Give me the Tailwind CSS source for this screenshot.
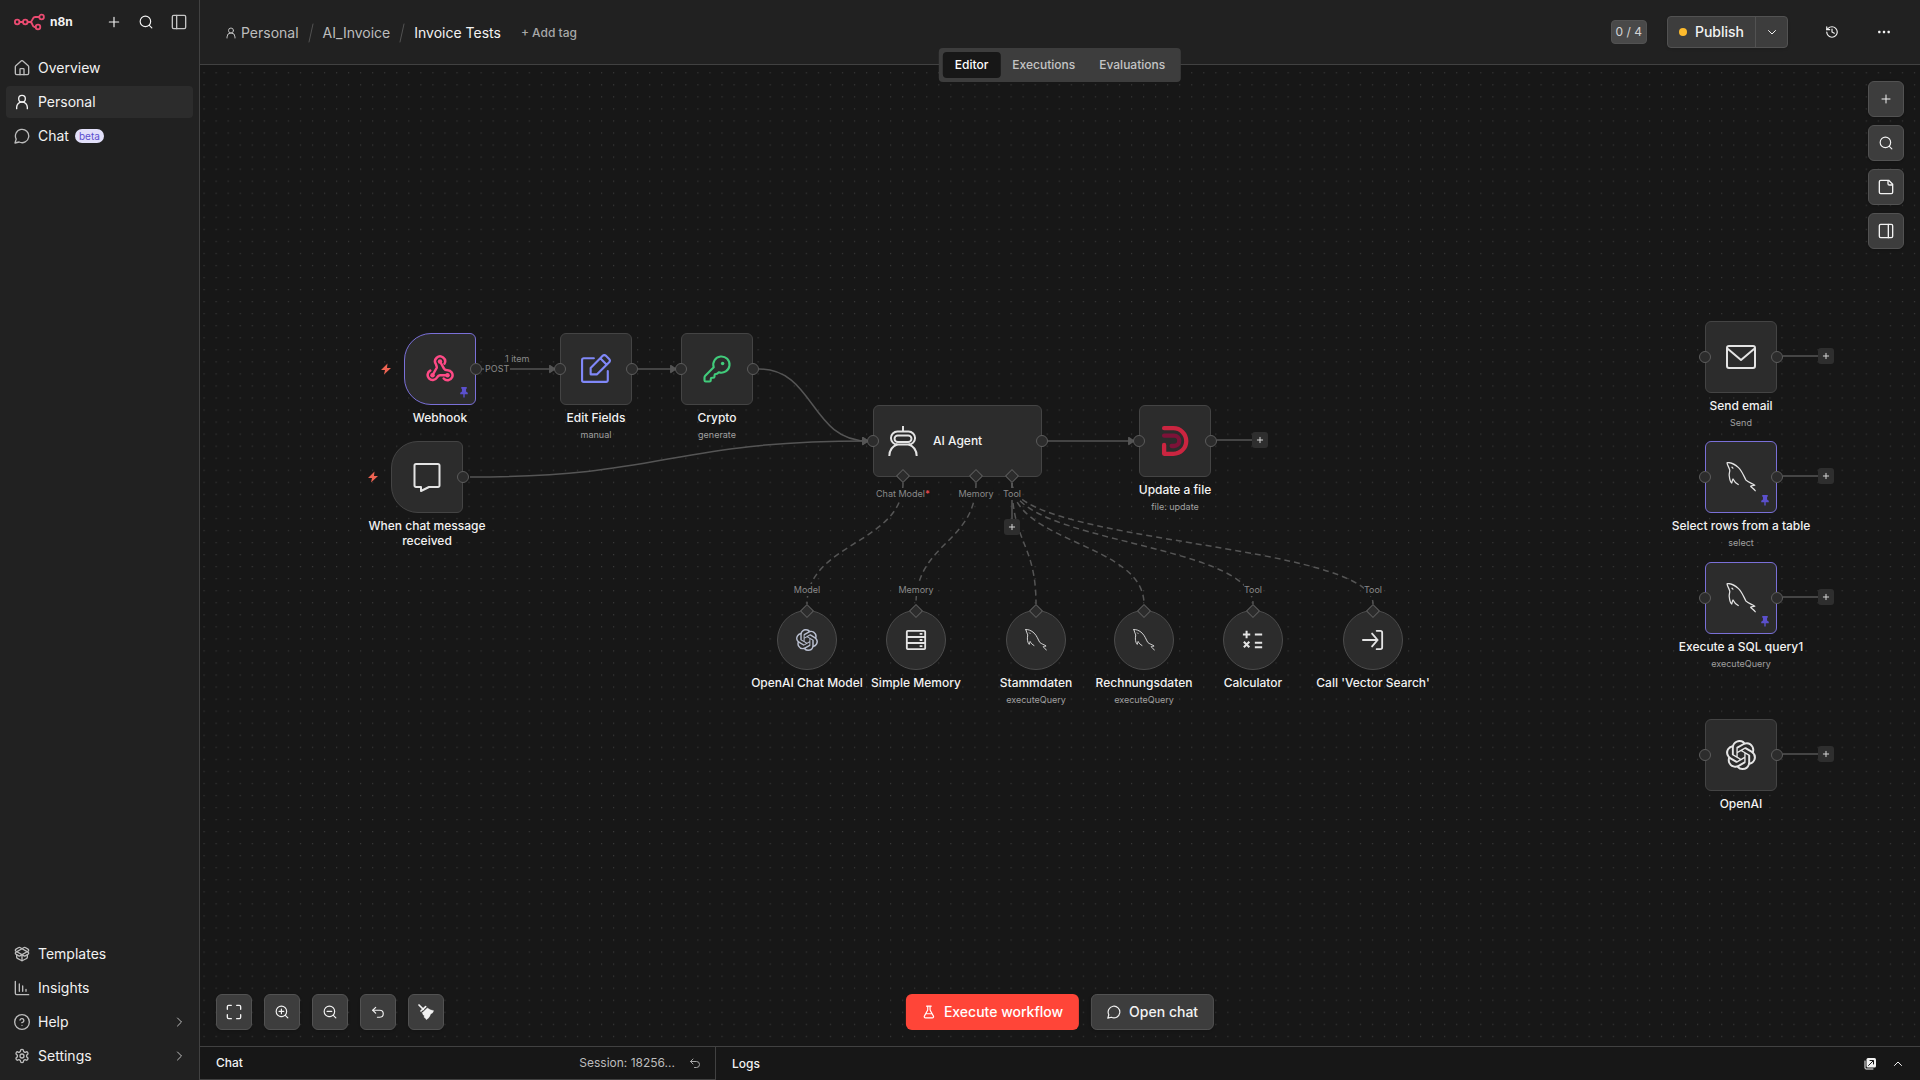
<!DOCTYPE html>
<html lang="en">
<head>
  <meta charset="UTF-8">
  <meta name="viewport" content="width=device-width, initial-scale=1.0">
  <title>Invoice Tests - n8n</title>
  <script src="https://cdn.jsdelivr.net/npm/@tailwindcss/browser@4"></script>
</head>
<body class="flex h-screen overflow-hidden bg-[#171717] fill-none stroke-current stroke-2 font-['Inter',sans-serif] text-sm text-[#f2f2f2] [stroke-linecap:round] [stroke-linejoin:round]">

  <!-- Icon sprite, stroke settings are inherited from the body -->
  <svg class="hidden">
    <symbol id="plus" viewBox="0 0 24 24"><path d="M4 12h16M12 4v16"/></symbol>
    <symbol id="search" viewBox="0 0 24 24"><circle cx="11" cy="11" r="9"/><path d="m22 22-4.3-4.3"/></symbol>
    <symbol id="panel-left" viewBox="0 0 24 24"><rect x="2" y="2" width="20" height="20" rx="2"/><path d="M8.500 2v20"/></symbol>
    <symbol id="panel-right" viewBox="0 0 24 24"><rect x="2" y="2" width="20" height="20" rx="2"/><path d="M15.500 2v20"/></symbol>
    <symbol id="home" viewBox="0 0 24 24"><path d="M15 22v-8a1 1 0 0 0-1-1h-4a1 1 0 0 0-1 1v8"/><path d="M2 10a2 2 0 0 1 .7-1.500l8-7a2 2 0 0 1 2.600 0l8 7A2 2 0 0 1 22 10v10a2 2 0 0 1-2 2H4a2 2 0 0 1-2-2z"/></symbol>
    <symbol id="user" viewBox="0 0 24 24"><circle cx="12" cy="7" r="5"/><path d="M20 22v-2a8 8 0 0 0-16 0v2"/></symbol>
    <symbol id="chat" viewBox="0 0 24 24"><path d="M7.700 21A10 10 0 1 0 3.300 16.700L1.500 22.500Z"/></symbol>
    <symbol id="package" viewBox="0 0 24 24"><path d="M12 22v-9"/><path d="M15.170 2.210a1.670 1.670 0 0 1 1.630 0L21 4.570a1.930 1.930 0 0 1 0 3.360L8.820 14.790a1.655 1.655 0 0 1-1.640 0L3 12.430a1.930 1.930 0 0 1 0-3.360z"/><path d="M20 13v3.870a2.060 2.060 0 0 1-1.110 1.830l-6 3.080a1.930 1.930 0 0 1-1.780 0l-6-3.080A2.060 2.060 0 0 1 4 16.870V13"/><path d="M21 12.430a1.930 1.930 0 0 0 0-3.360L8.830 2.200a1.640 1.640 0 0 0-1.630 0L3 4.570a1.930 1.930 0 0 0 0 3.360l12.180 6.860a1.636 1.636 0 0 0 1.630 0z"/></symbol>
    <symbol id="chart" viewBox="0 0 24 24"><path d="M2 2v18a2 2 0 0 0 2 2h18M8 6v11M13 9v8M18 14v3"/></symbol>
    <symbol id="help" viewBox="0 0 24 24"><circle cx="12" cy="12" r="11"/><path d="M9 9a3 3 0 0 1 5.830 1c0 2-3 3-3 3M12 17h.01"/></symbol>
    <symbol id="gear" viewBox="0 0 24 24"><path d="M12.220 2h-.44a2 2 0 0 0-2 2v.18a2 2 0 0 1-1 1.730l-.43.25a2 2 0 0 1-2 0l-.15-.08a2 2 0 0 0-2.730.73l-.22.38a2 2 0 0 0 .73 2.730l.15.1a2 2 0 0 1 1 1.720v.51a2 2 0 0 1-1 1.740l-.15.09a2 2 0 0 0-.73 2.730l.22.38a2 2 0 0 0 2.730.73l.15-.08a2 2 0 0 1 2 0l.43.25a2 2 0 0 1 1 1.730V20a2 2 0 0 0 2 2h.44a2 2 0 0 0 2-2v-.18a2 2 0 0 1 1-1.730l.43-.25a2 2 0 0 1 2 0l.15.08a2 2 0 0 0 2.730-.73l.22-.39a2 2 0 0 0-.73-2.730l-.15-.08a2 2 0 0 1-1-1.740v-.5a2 2 0 0 1 1-1.740l.15-.09a2 2 0 0 0 .73-2.730l-.22-.38a2 2 0 0 0-2.730-.73l-.15.08a2 2 0 0 1-2 0l-.43-.25a2 2 0 0 1-1-1.730V4a2 2 0 0 0-2-2z"/><circle cx="12" cy="12" r="3"/></symbol>
    <symbol id="chevron-right" viewBox="0 0 24 24"><path d="m9 20 8-8-8-8"/></symbol>
    <symbol id="chevron-down" viewBox="0 0 24 24"><path d="m5 9 7 7 7-7"/></symbol>
    <symbol id="chevron-up" viewBox="0 0 24 24"><path d="m5 15 7-7 7 7"/></symbol>
    <symbol id="history" viewBox="0 0 24 24"><path d="M3 12a9 9 0 1 0 9-9 9.750 9.750 0 0 0-6.740 2.740L3 8"/><path d="M3 3v5h5M12 7v5l4 2"/></symbol>
    <symbol id="dots" viewBox="0 0 24 24"><g fill="currentColor" stroke="none"><rect x="2" y="10" width="4" height="4" rx="1"/><rect x="10" y="10" width="4" height="4" rx="1"/><rect x="18" y="10" width="4" height="4" rx="1"/></g></symbol>
    <symbol id="note" viewBox="0 0 24 24"><path d="M16 2H4a2 2 0 0 0-2 2v16a2 2 0 0 0 2 2h16a2 2 0 0 0 2-2V8ZM15 2v5a2 2 0 0 0 2 2h5"/></symbol>
    <symbol id="fit" viewBox="0 0 24 24"><path d="M8 2H4a2 2 0 0 0-2 2v4M22 8V4a2 2 0 0 0-2-2h-4M2 16v4a2 2 0 0 0 2 2h4M16 22h4a2 2 0 0 0 2-2v-4"/></symbol>
    <symbol id="zoom-in" viewBox="0 0 24 24"><circle cx="11" cy="11" r="9"/><path d="m22 22-4.300-4.300M11 7v8M7 11h8"/></symbol>
    <symbol id="zoom-out" viewBox="0 0 24 24"><circle cx="11" cy="11" r="9"/><path d="m22 22-4.300-4.300M7 11h8"/></symbol>
    <symbol id="undo" viewBox="0 0 24 24"><path d="M8 14 3 9l5-5"/><path d="M3 9h12a6 6 0 0 1 0 12h-4"/></symbol>
    <symbol id="broom" viewBox="0 0 48 48"><path d="M3 3 16 16" stroke-width="5"/><path d="M9 21 23 8" stroke-width="5"/><path d="M13 26 28 12Q37 19 47 20 45 28 38 30 35 42 25 47 22 41 18 40L19 35Q14 33 13 26Z" fill="currentColor" stroke-width="1"/></symbol>
    <symbol id="flask" viewBox="0 0 24 24"><path d="M14 2v6a2 2 0 0 0 .25.96l5.500 10.080A2 2 0 0 1 18 22H6a2 2 0 0 1-1.750-2.960L9.750 8.960A2 2 0 0 0 10 8V2M6.500 15h11M8 2h8"/></symbol>
    <symbol id="popout" viewBox="0 0 24 24"><path d="M2 6v14a2 2 0 0 0 2 2h14"/><rect x="5" y="0" width="19" height="19" rx="3" fill="currentColor" stroke="none"/><path d="m9 15 9-9M12 5h7v7" stroke="#171717"/></symbol>
    <symbol id="bolt" viewBox="0 0 24 24"><path d="M15 1 2 14h8L8 23 22 10h-8Z" fill="currentColor" stroke="none"/></symbol>
    <symbol id="pin" viewBox="0 0 24 32"><path d="M4 0h16v4l-2 2v7l5 4v4H14v8l-2 3-2-3v-8H1v-4l5-4V6L4 4Z" fill="currentColor" stroke="none"/></symbol>
    <symbol id="webhook" viewBox="0 0 24 24"><path d="M18 17h-6c-1.100 0-1.950.94-2.480 1.900A4 4 0 1 1 4.200 13.300M6 17l3.300-5.800c.4-1-.2-2-.6-3.100a4 4 0 1 1 6.900-.3M12 6l3.200 5.700c.6 1 1.700 1.300 2.800 1.300a4 4 0 1 1-3 6.600"/><g fill="currentColor" stroke="none"><circle cx="12" cy="6" r="1.800"/><circle cx="6" cy="17" r="1.800"/><circle cx="18" cy="17" r="1.800"/></g></symbol>
    <symbol id="edit" viewBox="0 0 28 28"><path d="M12 4H2.500A1.500 1.500 0 0 0 1 5.500v19A1.500 1.500 0 0 0 2.500 26h21a1.500 1.500 0 0 0 1.500-1.500V16M9 19v-6L20.500 1.500a2 2 0 0 1 2.500 0L26.500 5a2 2 0 0 1 0 2.500L15 19ZM18 4l6 6"/></symbol>
    <symbol id="key" viewBox="0 0 24 24"><path d="M2.586 17.414A2 2 0 0 0 2 18.828V21a1 1 0 0 0 1 1h3a1 1 0 0 0 1-1v-1a1 1 0 0 1 1-1h1a1 1 0 0 0 1-1v-1a1 1 0 0 1 1-1h.172a2 2 0 0 0 1.414-.586l.814-.814a6.500 6.500 0 1 0-4-4z" stroke-width="1.700"/><circle cx="16.500" cy="7.500" r="1.400" fill="currentColor" stroke="none"/></symbol>
    <symbol id="message" viewBox="0 0 28 30"><path d="M3 2h22a1.500 1.500 0 0 1 1.500 1.500v20A1.500 1.500 0 0 1 25 25h-9l-8 4v-4H3a1.500 1.500 0 0 1-1.500-1.500v-20A1.500 1.500 0 0 1 3 2Z"/></symbol>
    <symbol id="robot" viewBox="0 0 92 92"><g stroke-width="6" stroke-linecap="butt"><path d="M46 0v15"/><rect x="9" y="17" width="74" height="40" rx="20"/><rect x="20" y="29" width="52" height="20" rx="10"/><path d="M4 92C4 74 14 62 29 56M88 92C88 74 78 62 63 56"/></g></symbol>
    <symbol id="paperless" viewBox="0 0 73 84"><path d="M6 27h28a14 14 0 0 1 0 29h-7" stroke="#7d1238" stroke-width="12"/><path d="M6 6h26a36 36 0 0 1 0 72H6V53" stroke="#cb2540" stroke-width="12"/></symbol>
    <symbol id="mail" viewBox="0 0 30 26"><rect x="1" y="2" width="28" height="22" rx="2"/><path d="m2 5 13 11L28 5"/></symbol>
    <symbol id="mysql" viewBox="0 0 24 24"><path d="M.8.600C3 .2 7 1.500 10 4.500 13 7.500 14.300 11.500 16 14.500 18 16.500 21 17 23 18.600 21.500 18.800 19 19 20 19.800 21 20.800 22.500 21.500 23.400 23M.8.600C1 2.500 2.600 4.500 3 6.500 3 8.500 2.300 9.500 2.600 11 2.800 13 3.400 16 4.600 16.800 5 15.500 5 14.500 5.600 13.600 6.500 15.500 8 17 9.800 18M4.800 4.200l.7.700" stroke-width="1"/></symbol>
    <symbol id="openai" viewBox="0 0 24 24"><path fill="currentColor" stroke="none" d="M22.2819 9.8211a5.9847 5.9847 0 0 0-.5157-4.9108 6.0462 6.0462 0 0 0-6.5098-2.9A6.0651 6.0651 0 0 0 4.9807 4.1818a5.9847 5.9847 0 0 0-3.9977 2.9 6.0462 6.0462 0 0 0 .7427 7.0966 5.98 5.98 0 0 0 .511 4.9107 6.051 6.051 0 0 0 6.5146 2.9001A5.9847 5.9847 0 0 0 13.2599 24a6.0557 6.0557 0 0 0 5.7718-4.2058 5.9894 5.9894 0 0 0 3.9977-2.9001 6.0557 6.0557 0 0 0-.7475-7.0729zm-9.022 12.6081a4.4755 4.4755 0 0 1-2.8764-1.0408l.1419-.0804 4.7783-2.7582a.7948.7948 0 0 0 .3927-.6813v-6.7369l2.02 1.1686a.071.071 0 0 1 .038.052v5.5826a4.504 4.504 0 0 1-4.4945 4.4944zm-9.6607-4.1254a4.4708 4.4708 0 0 1-.5346-3.0137l.142.0852 4.783 2.7582a.7712.7712 0 0 0 .7806 0l5.8428-3.3685v2.3324a.0804.0804 0 0 1-.0332.0615L9.74 19.9502a4.4992 4.4992 0 0 1-6.1408-1.6464zM2.3408 7.8956a4.485 4.485 0 0 1 2.3655-1.9728V11.6a.7664.7664 0 0 0 .3879.6765l5.8144 3.3543-2.0201 1.1685a.0757.0757 0 0 1-.071 0l-4.8303-2.7865A4.504 4.504 0 0 1 2.3408 7.872zm16.5963 3.8558L13.1038 8.364 15.1192 7.2a.0757.0757 0 0 1 .071 0l4.8303 2.7913a4.4944 4.4944 0 0 1-.6765 8.1042v-5.6772a.79.79 0 0 0-.407-.667zm2.0107-3.0231l-.142-.0852-4.7735-2.7818a.7759.7759 0 0 0-.7854 0L9.409 9.2297V6.8974a.0662.0662 0 0 1 .0284-.0615l4.8303-2.7866a4.4992 4.4992 0 0 1 6.6802 4.66zM8.3065 12.863l-2.02-1.1638a.0804.0804 0 0 1-.038-.0567V6.0742a4.4992 4.4992 0 0 1 7.3757-3.4537l-.142.0805L8.704 5.459a.7948.7948 0 0 0-.3927.6813zm1.0976-2.3654l2.602-1.4998 2.6069 1.4998v2.9994l-2.5974 1.4997-2.6067-1.4997Z"/></symbol>
    <symbol id="memory" viewBox="0 0 24 24"><rect x="2" y="2" width="20" height="20" rx="1"/><path d="M2 8.700h20M2 15.300h20M16 5.400h3M16 12h3M16 18.700h3" stroke-linecap="butt"/></symbol>
    <symbol id="calculator" viewBox="0 0 24 24"><path d="M5 2v8M1 6h8M14 6h8M14 15h8M14 20h8M2 14l6 6M8 14l-6 6" stroke-width="2.200" stroke-linecap="butt"/></symbol>
    <symbol id="login" viewBox="0 0 24 24"><path d="M16 2h4a2 2 0 0 1 2 2v16a2 2 0 0 1-2 2h-4M1 12h16M11 5l6 7-6 7"/></symbol>
  </svg>

  <!-- Sidebar -->
  <aside class="flex w-[200px] shrink-0 flex-col border-r border-[#414141] bg-[#212121] pb-2">
    <div class="flex h-11 items-center pl-[14px] pr-3">
      <svg class="h-[18px] w-8" viewBox="0 0 32 18" fill="none" stroke="#ea4b71" stroke-width="1.800"><circle cx="3.200" cy="9" r="2.300"/><circle cx="11.300" cy="9" r="2.300"/><circle cx="27.600" cy="4" r="2.300"/><circle cx="24" cy="14" r="2.300"/><path d="M5.500 9H9M13.600 9h2.400c3 0 1.800-5 5-5h4.300M16 9c3 0 1.800 5 4.500 5h1.200"/></svg>
      <span class="ml-1 text-xs font-bold">n8n</span>
      <div class="ml-auto flex items-center gap-[18px]">
        <button aria-label="Create"><svg class="size-[14px]"><use href="#plus"/></svg></button>
        <button aria-label="Search"><svg class="size-[14px]"><use href="#search"/></svg></button>
        <button aria-label="Toggle sidebar" class="text-[#c4c4c4]"><svg class="size-4"><use href="#panel-left"/></svg></button>
      </div>
    </div>
    <nav class="mt-2 flex flex-1 flex-col gap-[2px] px-[6px]">
      <a href="#" class="flex h-8 items-center gap-2 rounded px-2"><svg class="size-4 text-[#bdbdbd]"><use href="#home"/></svg>Overview</a>
      <a href="#" class="flex h-8 items-center gap-2 rounded bg-[#2c2c2c] px-2"><svg class="size-4"><use href="#user"/></svg>Personal</a>
      <a href="#" class="flex h-8 items-center gap-2 rounded px-2"><svg class="size-4 text-[#bdbdbd]"><use href="#chat"/></svg>Chat <span class="-ml-[2px] rounded-full bg-[#e2e0fa] px-1 text-[10px] leading-[14px] text-[#5a4fcf]">beta</span></a>
      <a href="#" class="mt-auto flex h-8 items-center gap-2 rounded px-2"><svg class="size-4 text-[#bdbdbd]"><use href="#package"/></svg>Templates</a>
      <a href="#" class="flex h-8 items-center gap-2 rounded px-2"><svg class="size-4 text-[#bdbdbd]"><use href="#chart"/></svg>Insights</a>
      <a href="#" class="flex h-8 items-center gap-2 rounded px-2"><svg class="size-4 text-[#bdbdbd]"><use href="#help"/></svg>Help<svg class="ml-auto size-3 text-[#bdbdbd]"><use href="#chevron-right"/></svg></a>
      <a href="#" class="flex h-8 items-center gap-2 rounded px-2"><svg class="size-4 text-[#bdbdbd]"><use href="#gear"/></svg>Settings<svg class="ml-auto size-3 text-[#bdbdbd]"><use href="#chevron-right"/></svg></a>
    </nav>
  </aside>

  <main class="relative flex min-w-0 flex-1 flex-col">
    <!-- Header -->
    <header class="flex h-[65px] shrink-0 items-center border-b border-[#414141] bg-[#212121] pl-[25px] pr-5">
      <nav class="flex items-center pt-[2px] text-[#bdbdbd]">
        <a href="#" class="flex items-center gap-1"><svg class="size-3"><use href="#user"/></svg>Personal</a>
        <svg class="mx-[9px] h-5 w-[6px]" viewBox="0 0 6 20" stroke="#525252" stroke-width="1"><path d="M5 1 1 19"/></svg>
        <a href="#">AI_Invoice</a>
        <svg class="mx-[9px] h-5 w-[6px]" viewBox="0 0 6 20" stroke="#525252" stroke-width="1"><path d="M5 1 1 19"/></svg>
        <h1 class="text-[#f2f2f2]">Invoice Tests</h1>
      </nav>
      <button class="ml-5 pt-[2px] text-xs font-medium text-[#a8a8a8]">+ Add tag</button>
      <div class="ml-auto flex items-center">
        <span class="rounded border border-[#525252] bg-[#494949] px-1 text-xs leading-[22px] text-[#d4d4d4]">0 / 4</span>
        <div class="ml-5 flex h-8 rounded border border-[#525252] bg-[#3d3d3d] shadow">
          <button class="flex items-center gap-2 px-[11px] font-medium"><span class="size-2 rounded-full bg-[#fdbb2d]"></span>Publish</button>
          <button aria-label="Publish options" class="flex w-8 items-center justify-center border-l border-[#525252]"><svg class="size-3"><use href="#chevron-down"/></svg></button>
        </div>
        <button aria-label="History" class="ml-[26px] flex size-9 items-center justify-center"><svg class="size-[14px]"><use href="#history"/></svg></button>
        <button aria-label="More" class="ml-[18px] flex size-8 items-center justify-center"><svg class="size-[14px]"><use href="#dots"/></svg></button>
      </div>
    </header>

    <!-- View switch, lies over the header's lower edge -->
    <div class="absolute left-1/2 top-12 z-10 flex h-[34px] -translate-x-1/2 rounded bg-[#3d3d3d] p-1 text-xs font-medium text-[#c4c4c4]">
      <button class="rounded bg-[#171717] px-3 text-white">Editor</button>
      <button class="px-3">Executions</button>
      <button class="px-3">Evaluations</button>
    </div>

    <!-- Canvas -->
    <section id="canvas" class="relative min-h-0 flex-1 overflow-hidden">
      <svg class="absolute inset-0 h-full w-full" fill="none" stroke="#555" stroke-width="1.500" stroke-linecap="butt">
        <defs>
          <pattern id="grid" width="12.045" height="12.045" patternUnits="userSpaceOnUse" x="3.500" y="7.200"><circle cx=".6" cy=".6" r=".6" fill="#424242" stroke="none"/></pattern>
          <marker id="arrow" viewBox="0 0 8 10" refX="7" refY="5" markerWidth="7" markerHeight="9" markerUnits="userSpaceOnUse" orient="0"><path d="M1 1v8l6-4Z" fill="#555" stroke="#555"/></marker>
        </defs>
        <rect width="100%" height="100%" fill="url(#grid)" stroke="none"/>
        <g marker-end="url(#arrow)">
          <path d="M282 304H355"/>
          <path d="M438 304H476"/>
          <path d="M559 304C615 304 610 376 668 376"/>
          <path d="M270 412C468 412 468 376 668 376"/>
          <path d="M848 376H934"/>
        </g>
        <path d="M1017 375h36M1583 291h36M1583 411h36M1583 532h36M1583 689h36M812 418v38"/>
        <g stroke-dasharray="6 4">
          <path d="M703 418C703 478 607 478 607 539"/>
          <path d="M776 418C776 478 716 478 716 539"/>
          <path d="M812 418C812 478 836 478 836 539"/>
          <path d="M812 418C812 478 944 478 944 539"/>
          <path d="M812 418C812 478 1053 478 1053 539"/>
          <path d="M812 418C812 478 1173 478 1173 539"/>
        </g>
      </svg>
      <div id="nodes"></div>

      <span class="absolute left-[284px] top-[298px] bg-[#171717] px-px text-[9px] leading-3 text-[#8a8a8a]">POST</span>
      <span class="absolute left-[305px] top-[288px] text-[9px] leading-3 text-[#8a8a8a]">1 item</span>

      <div class="absolute right-4 top-4 flex flex-col gap-2">
        <button aria-label="Add node" class="flex size-9 items-center justify-center rounded-md border border-[#525252] bg-[#3d3d3d] shadow"><svg class="size-3"><use href="#plus"/></svg></button>
        <button aria-label="Find" class="flex size-9 items-center justify-center rounded-md border border-[#525252] bg-[#3d3d3d] shadow"><svg class="size-[14px]"><use href="#search"/></svg></button>
        <button aria-label="Add note" class="flex size-9 items-center justify-center rounded-md border border-[#525252] bg-[#3d3d3d] shadow"><svg class="size-4"><use href="#note"/></svg></button>
        <button aria-label="Toggle panel" class="flex size-9 items-center justify-center rounded-md border border-[#525252] bg-[#3d3d3d] shadow"><svg class="size-4"><use href="#panel-right"/></svg></button>
      </div>

      <div class="absolute bottom-4 left-4 flex gap-3">
        <button aria-label="Fit view" class="flex size-9 items-center justify-center rounded-md border border-[#525252] bg-[#3d3d3d] shadow"><svg class="size-4"><use href="#fit"/></svg></button>
        <button aria-label="Zoom in" class="flex size-9 items-center justify-center rounded-md border border-[#525252] bg-[#3d3d3d] shadow"><svg class="size-[14px]"><use href="#zoom-in"/></svg></button>
        <button aria-label="Zoom out" class="flex size-9 items-center justify-center rounded-md border border-[#525252] bg-[#3d3d3d] shadow"><svg class="size-[14px]"><use href="#zoom-out"/></svg></button>
        <button aria-label="Undo" class="flex size-9 items-center justify-center rounded-md border border-[#525252] bg-[#3d3d3d] shadow"><svg class="size-[14px]"><use href="#undo"/></svg></button>
        <button aria-label="Tidy up" class="flex size-9 items-center justify-center rounded-md border border-[#525252] bg-[#3d3d3d] shadow"><svg class="size-4"><use href="#broom"/></svg></button>
      </div>

      <div class="absolute bottom-4 left-1/2 flex -translate-x-1/2 gap-3 font-medium">
        <button class="flex h-9 items-center gap-2 rounded-md bg-[#ff4538] px-4 text-white"><svg class="size-[14px]"><use href="#flask"/></svg>Execute workflow</button>
        <button class="flex h-9 items-center gap-2 rounded-md border border-[#525252] bg-[#3d3d3d] px-[15px] shadow"><svg class="size-[14px]"><use href="#chat"/></svg>Open chat</button>
      </div>
    </section>

    <!-- Chat and logs bar -->
    <footer class="flex h-[34px] shrink-0 border-t border-[#414141] text-xs font-medium">
      <div class="flex w-[30%] items-center border-b border-r border-[#414141] pl-4 pr-[14px]">
        <span>Chat</span>
        <span class="ml-auto font-normal text-[#bdbdbd]">Session: 18256...</span>
        <button aria-label="Reset session" class="ml-[14px] text-[#a8a8a8]"><svg class="size-3"><use href="#undo"/></svg></button>
      </div>
      <div class="flex flex-1 items-center pl-4 pr-4">
        <span>Logs</span>
        <button aria-label="Pop out" class="ml-auto"><svg class="size-3"><use href="#popout"/></svg></button>
        <button aria-label="Expand" class="ml-4"><svg class="size-3"><use href="#chevron-up"/></svg></button>
      </div>
    </footer>
  </main>

  <script>
    const nodes = [
      { name: "Webhook", icon: "webhook", x: 204, y: 268, color: "text-[#ff4a86]", trigger: true, pinned: true, out: true },
      { name: "When chat message received", icon: "message", x: 191, y: 376, trigger: true, out: true },
      { name: "Edit Fields", sub: "manual", icon: "edit", x: 360, y: 268, color: "text-[#8088f8]", in: true, out: true },
      { name: "Crypto", sub: "generate", icon: "key", x: 481, y: 268, color: "text-[#41cc7b]", in: true, out: true },
      { name: "Update a file", sub: "file: update", icon: "paperless", x: 939, y: 340, in: true, out: true, plus: true },
      { name: "Send email", sub: "Send", icon: "mail", x: 1505, y: 256, in: true, out: true, plus: true },
      { name: "Select rows from a table", sub: "select", icon: "mysql", x: 1505, y: 376, pinned: true, in: true, out: true, plus: true },
      { name: "Execute a SQL query1", sub: "executeQuery", icon: "mysql", x: 1505, y: 497, pinned: true, in: true, out: true, plus: true },
      { name: "OpenAI", icon: "openai", x: 1505, y: 654, in: true, out: true, plus: true },
    ];

    const subNodes = [
      { name: "OpenAI Chat Model", icon: "openai", x: 577, label: "Model", color: "text-[#b9bfd0]" },
      { name: "Simple Memory", icon: "memory", x: 686, label: "Memory" },
      { name: "Stammdaten", sub: "executeQuery", icon: "mysql", x: 806 },
      { name: "Rechnungsdaten", sub: "executeQuery", icon: "mysql", x: 914 },
      { name: "Calculator", icon: "calculator", x: 1023, label: "Tool" },
      { name: "Call 'Vector Search'", icon: "login", x: 1143, label: "Tool" },
    ];

    const dot = "absolute top-1/2 size-3 -translate-y-1/2 rounded-full border border-[#5c5c5c] bg-[#2c2c2c]";
    const diamond = "absolute size-[10px] -translate-x-1/2 -translate-y-1/2 rotate-45 border border-[#5c5c5c] bg-[#2c2c2c]";
    const plusButton = "absolute flex size-4 items-center justify-center rounded-[3px] bg-[#2e2e2e] text-[#d4d4d4]";
    const portLabel = "absolute -translate-x-1/2 bg-[#171717] text-[9px] leading-3 text-[#8a8a8a]";

    function caption(node) {
      return `
        <div class="absolute left-1/2 w-40 -translate-x-1/2 pt-[5px] text-center">
          <p class="mx-auto ${node.trigger ? "w-32" : "w-40"} text-xs font-medium leading-[15px]">${node.name}</p>
          ${node.sub ? `<p class="mt-1 text-[9px] leading-3 text-[#a0a0a0]">${node.sub}</p>` : ""}
        </div>`;
    }

    function renderNode(node) {
      const radius = node.trigger ? "rounded-l-[27px] rounded-r-md" : "rounded-md";
      const border = node.pinned ? "border-[#7a70d8]" : "border-[#444]";
      return `
        <div class="absolute w-[72px]" style="left:${node.x}px;top:${node.y}px">
          ${node.trigger ? `<svg class="absolute -left-6 top-[30px] size-3 text-[#ee6352]"><use href="#bolt"/></svg>` : ""}
          <div class="relative flex size-[72px] items-center justify-center border bg-[#2c2c2c] ${radius} ${border}">
            <svg class="size-[30px] ${node.color || "text-[#e4e4e4]"}"><use href="#${node.icon}"/></svg>
            ${node.pinned ? `<svg class="absolute bottom-[6px] right-[6px] h-[11px] w-[10px] text-[#5b50cc]"><use href="#pin"/></svg>` : ""}
            ${node.in ? `<i class="${dot} -left-[7px]"></i>` : ""}
            ${node.out ? `<i class="${dot} -right-[7px]"></i>` : ""}
            ${node.plus ? `<button aria-label="Add node" class="${plusButton} -right-[58px] top-[26px]"><svg class="size-2"><use href="#plus" stroke-width="3"/></svg></button>` : ""}
          </div>
          ${caption(node)}
        </div>`;
    }

    function renderSubNode(node) {
      return `
        <div class="absolute top-[545px] w-[60px]" style="left:${node.x}px">
          ${node.label ? `<span class="${portLabel} -top-[26px] left-1/2">${node.label}</span>` : ""}
          <div class="relative flex size-[60px] items-center justify-center rounded-full border border-[#4c4c4c] bg-[#2c2c2c]">
            <svg class="size-[22px] ${node.color || "text-[#e4e4e4]"}"><use href="#${node.icon}"/></svg>
            <i class="${diamond} left-1/2 top-0"></i>
          </div>
          ${caption(node)}
        </div>`;
    }

    const agent = `
      <div class="absolute left-[673px] top-[340px] flex h-[72px] w-[169px] items-center gap-[15px] rounded-md border border-[#444] bg-[#2c2c2c] pl-[14px]">
        <svg class="size-[30px] text-[#e4e4e4]"><use href="#robot"/></svg>
        <span class="text-xs font-medium">AI Agent</span>
        <i class="${dot} -left-[7px]"></i>
        <i class="${dot} -right-[7px]"></i>
        <i class="${diamond} left-[29px] top-full"></i>
        <i class="${diamond} left-[102px] top-full"></i>
        <i class="${diamond} left-[138px] top-full"></i>
        <span class="${portLabel} left-[29px] top-[82px] whitespace-nowrap">Chat Model<b class="text-[#e5484d]">*</b></span>
        <span class="${portLabel} left-[102px] top-[82px]">Memory</span>
        <span class="${portLabel} left-[138px] top-[82px]">Tool</span>
        <button aria-label="Add tool" class="${plusButton} left-[130px] top-[113px]"><svg class="size-2"><use href="#plus" stroke-width="3"/></svg></button>
      </div>`;

    document.getElementById("nodes").innerHTML =
      nodes.map(renderNode).join("") + subNodes.map(renderSubNode).join("") + agent;
  </script>
</body>
</html>
